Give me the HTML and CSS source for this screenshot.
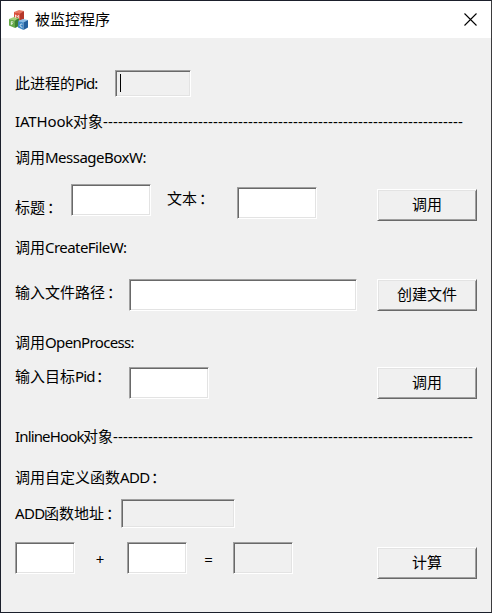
FILE: index.html
```html
<!DOCTYPE html>
<html lang="zh-CN">
<head>
<meta charset="utf-8">
<title>被监控程序</title>
<link rel="stylesheet" href="styles.css">
</head>
<body>
<div class="window">
  <header class="titlebar">
    <svg class="app-icon" width="20" height="20" viewBox="0 0 20 20">
      <path fill="#e87560" d="M5 2 10 0 15 1 11 4Z"/><path fill="#d9503c" d="M5 2 11 3.5V11L5 9Z"/><path fill="#b5362a" d="M11 3.5 15 1V9L11 11Z"/>
      <path fill="#a4cf78" d="M0 9 5 7 10 8 6 11Z"/><path fill="#65a948" d="M0 9 6 10.5V18L0 15.5Z"/><path fill="#3b8033" d="M6 10.5 10 8V16L6 18Z"/>
      <path fill="#8bbce5" d="M9 11 14 9 19 10 15 13Z"/><path fill="#3f88c5" d="M9 11 14.5 12.5V20L9 17.5Z"/><path fill="#235f9d" d="M14.5 12.5 19 10V17.5L14.5 20Z"/>
      <path fill="none" stroke="#fff" stroke-opacity=".85" stroke-width=".9" d="M6.5 7.8V4.8L8 6.7 9.7 5.4V8.5M2.3 15V11.6L4.5 12.1M2.3 13.4 4 13.8M13.3 14.3C10.3 13.3 10.3 17 13.3 17.3"/>
    </svg>
    <span class="title">被监控程序</span>
    <svg class="close" width="13" height="13" viewBox="0 0 13 13"><path d="M.5.5 12.5 12.5M12.5.5.5 12.5"/></svg>
  </header>
  <main class="dialog">
    <div class="row pid"><label>此进程的<span class="l-pid">Pid:</span></label><div class="field readonly"><i class="caret"></i></div></div>
    <div class="row iat"><label><span class="l-iat">IATHook</span>对象<span class="dashes">------------------------------------------------------------------------</span></label></div>
    <div class="row msg"><label>调用<span class="l-msg">MessageBoxW:</span></label></div>
    <div class="row message-form"><label class="caption">标题<span class="colon">：</span></label><div class="field"></div><label class="content">文本<span class="colon">：</span></label><div class="field second"></div><button>调用</button></div>
    <div class="row create"><label>调用<span class="l-create">CreateFileW:</span></label></div>
    <div class="row path-form"><label>输入文件路径<span class="colon">：</span></label><div class="field"></div><button>创建文件</button></div>
    <div class="row open"><label>调用<span class="l-open">OpenProcess:</span></label></div>
    <div class="row open-form"><label>输入目标<span class="l-target">Pid</span><span class="colon">：</span></label><div class="field"></div><button>调用</button></div>
    <div class="row inline"><label><span class="l-inline">InlineHook</span>对象<span class="dashes">------------------------------------------------------------------------</span></label></div>
    <div class="row custom"><label>调用自定义函数<span class="l-add">ADD</span><span class="colon">：</span></label></div>
    <div class="row address"><label><span class="l-add">ADD</span>函数地址<span class="colon">：</span></label><div class="field readonly"></div></div>
    <div class="row sum"><div class="field"></div><span class="op">+</span><div class="field"></div><span class="op equals">=</span><div class="field readonly"></div><button>计算</button></div>
  </main>
</div>
</body>
</html>
```
FILE: styles.css
```css
* { box-sizing: border-box; }
body { margin: 0; font: 15px/20px "Noto Sans", "Noto Sans CJK SC", sans-serif; color: #000; }
.window { width: 492px; height: 613px; border: 1px solid #1b1f2b; border-right-color: #3b3b3d; background: #f0f0f0; overflow: hidden; }
.titlebar { height: 37px; background: #fff; display: flex; align-items: center; padding: 0 14px 0 8px; }
.title { margin-left: 6px; line-height: 22px; padding-bottom: 2px; }
.close { margin-left: auto; fill: none; stroke: #000; stroke-width: 1.1; }
.dialog { padding: 32px 14px 0; }
.row { display: flex; align-items: flex-start; height: 20px; white-space: nowrap; }
label { flex: none; line-height: 18px; }
label span { display: inline-block; white-space: nowrap; }
.field { flex: none; width: 80px; height: 32px; background: #fff; border: 1px solid; border-color: #a0a0a0 #fff #fff #a0a0a0; box-shadow: inset 1px 1px #696969, inset -1px -1px #e3e3e3; }
.readonly { background: #f0f0f0; }
button { flex: none; width: 100px; height: 32px; margin: 0 0 0 auto; padding: 0 0 2px; border: 1px solid; border-color: #fff #696969 #696969 #fff; box-shadow: inset 1px 1px #e3e3e3, inset -1px -1px #a0a0a0; background: #f0f0f0; font: inherit; color: #000; }
.colon { width: 15px; padding-left: 2px; }
.l-pid { width: 25px; letter-spacing: -1px; }
.l-iat { width: 58px; letter-spacing: -.15px; }
.l-msg { letter-spacing: -.5px; }
.l-create { letter-spacing: -.55px; }
.l-open { letter-spacing: -.65px; }
.l-target { width: 19px; letter-spacing: -.8px; }
.l-inline { width: 68px; letter-spacing: -.85px; }
.l-add { width: 29px; letter-spacing: -.6px; }
.dashes { letter-spacing: .17px; }
.pid { height: 27px; }
.pid label { width: 100px; padding-top: 4px; }
.pid .field { width: 76px; height: 27px; padding: 3px 4px; }
.caret { display: block; width: 1px; height: 18px; background: #000; }
.iat { margin-top: 15px; }
.msg { margin-top: 16px; }
.message-form { margin-top: 16px; height: 37px; }
.caption { width: 56px; padding-top: 14px; }
.content { width: 86px; padding: 5px 0 0 16px; }
.second { margin-top: 3px; }
.message-form button { margin-top: 5px; }
.create { margin-top: 17px; }
.path-form { margin-top: 21px; height: 32px; }
.path-form label { width: 114px; padding-top: 4px; }
.path-form .field { width: 228px; }
.open { margin-top: 22px; }
.open-form { margin-top: 14px; height: 32px; }
.open-form label { width: 114px; }
.inline { margin-top: 28px; }
.custom { margin-top: 21px; }
.address { margin-top: 11px; height: 29px; }
.address label { width: 106px; padding-top: 5px; }
.address .field { width: 114px; height: 29px; }
.sum { margin-top: 14px; height: 37px; }
.sum .field { width: 60px; }
.sum button { margin-top: 5px; }
.op { width: 52px; padding: 7px 2px 0 0; text-align: center; }
.equals { width: 46px; padding-right: 3px; }
```
